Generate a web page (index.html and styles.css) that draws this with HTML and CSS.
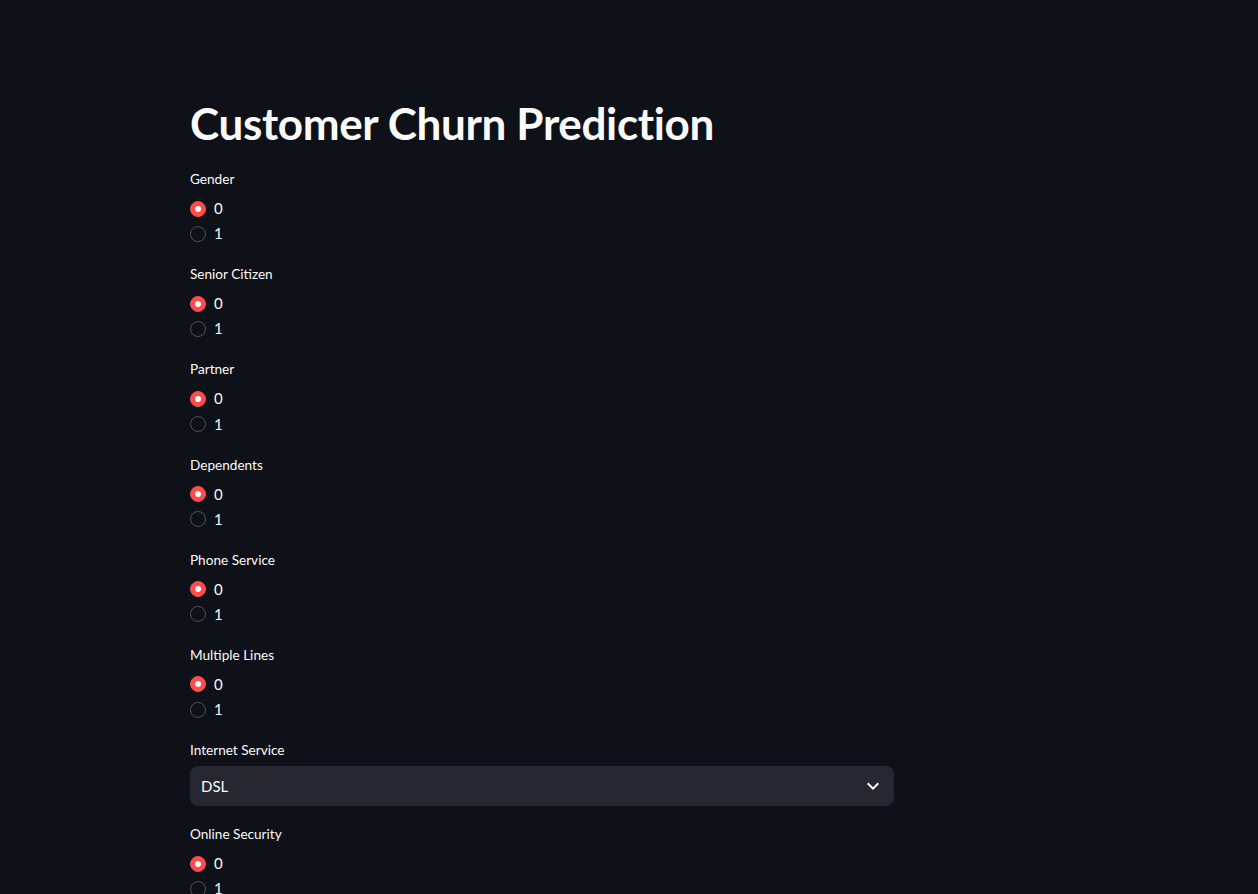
FILE: index.html
```html
<!DOCTYPE html>
<html lang="en">
<head>
<meta charset="utf-8">
<title>Customer Churn Prediction</title>
<link rel="stylesheet" href="styles.css">
</head>
<body>
<main class="app">
  <div class="block">
    <h1 class="title">Customer Churn Prediction</h1>

    <div class="field">
      <div class="label">Gender</div>
      <div class="options">
        <div class="opt"><span class="dot on"></span><span class="opt-text">0</span></div>
        <div class="opt"><span class="dot"></span><span class="opt-text">1</span></div>
      </div>
    </div>

    <div class="field">
      <div class="label">Senior Citizen</div>
      <div class="options">
        <div class="opt"><span class="dot on"></span><span class="opt-text">0</span></div>
        <div class="opt"><span class="dot"></span><span class="opt-text">1</span></div>
      </div>
    </div>

    <div class="field">
      <div class="label">Partner</div>
      <div class="options">
        <div class="opt"><span class="dot on"></span><span class="opt-text">0</span></div>
        <div class="opt"><span class="dot"></span><span class="opt-text">1</span></div>
      </div>
    </div>

    <div class="field">
      <div class="label">Dependents</div>
      <div class="options">
        <div class="opt"><span class="dot on"></span><span class="opt-text">0</span></div>
        <div class="opt"><span class="dot"></span><span class="opt-text">1</span></div>
      </div>
    </div>

    <div class="field">
      <div class="label">Phone Service</div>
      <div class="options">
        <div class="opt"><span class="dot on"></span><span class="opt-text">0</span></div>
        <div class="opt"><span class="dot"></span><span class="opt-text">1</span></div>
      </div>
    </div>

    <div class="field">
      <div class="label">Multiple Lines</div>
      <div class="options">
        <div class="opt"><span class="dot on"></span><span class="opt-text">0</span></div>
        <div class="opt"><span class="dot"></span><span class="opt-text">1</span></div>
      </div>
    </div>

    <div class="field field-select">
      <div class="label">Internet Service</div>
      <div class="select">
        <span class="select-value">DSL</span>
        <svg class="chev" viewBox="0 0 24 24" width="24" height="24" aria-hidden="true"><path d="M16.59 8.59L12 13.17 7.41 8.59 6 10l6 6 6-6z" fill="#fafafa"/></svg>
      </div>
    </div>

    <div class="field">
      <div class="label">Online Security</div>
      <div class="options">
        <div class="opt"><span class="dot on"></span><span class="opt-text">0</span></div>
        <div class="opt"><span class="dot"></span><span class="opt-text">1</span></div>
      </div>
    </div>
  </div>
</main>
</body>
</html>
```

FILE: styles.css
```css
html, body {
  margin: 0;
  padding: 0;
  background: #0e1117;
  color: #fafafa;
  font-family: Lato, "Noto Sans", sans-serif;
  height: 894px;
  overflow: hidden;
}

.app {
  padding-left: 190px;
}

.block {
  width: 704px;
  display: flex;
  flex-direction: column;
  gap: 16px;
  padding-top: 97px;
}

.title {
  margin: 0 0 2px 0;
  font-size: 44px;
  font-weight: 700;
  line-height: 52px;
  color: #fafafa;
  letter-spacing: -0.35px;
}

.field {
  display: flex;
  flex-direction: column;
}

.label {
  height: 24px;
  line-height: 24px;
  font-size: 13.6px;
  margin-bottom: 5px;
  color: #fafafa;
}

.field-select .label {
  margin-bottom: 4px;
}

.options {
  display: flex;
  flex-direction: column;
}

.opt {
  height: 25.1px;
  display: flex;
  align-items: center;
}

.dot {
  width: 16px;
  height: 16px;
  box-sizing: border-box;
  border-radius: 50%;
  border: 1px solid rgba(250, 250, 250, 0.28);
  margin-right: 8px;
  position: relative;
  flex: none;
}

.dot.on {
  background: #ff4b4b;
  border-color: #ff4b4b;
}

.dot.on::after {
  content: "";
  position: absolute;
  left: 50%;
  top: 50%;
  width: 6px;
  height: 6px;
  margin: -3px 0 0 -3px;
  border-radius: 50%;
  background: #ffffff;
}

.opt-text {
  font-size: 15px;
  line-height: 1;
}

.select {
  height: 40px;
  background: #262730;
  border-radius: 8px;
  display: flex;
  align-items: center;
  justify-content: space-between;
  padding: 0 9px 0 11px;
}

.select-value {
  font-size: 15px;
}

.chev {
  display: block;
}
```
